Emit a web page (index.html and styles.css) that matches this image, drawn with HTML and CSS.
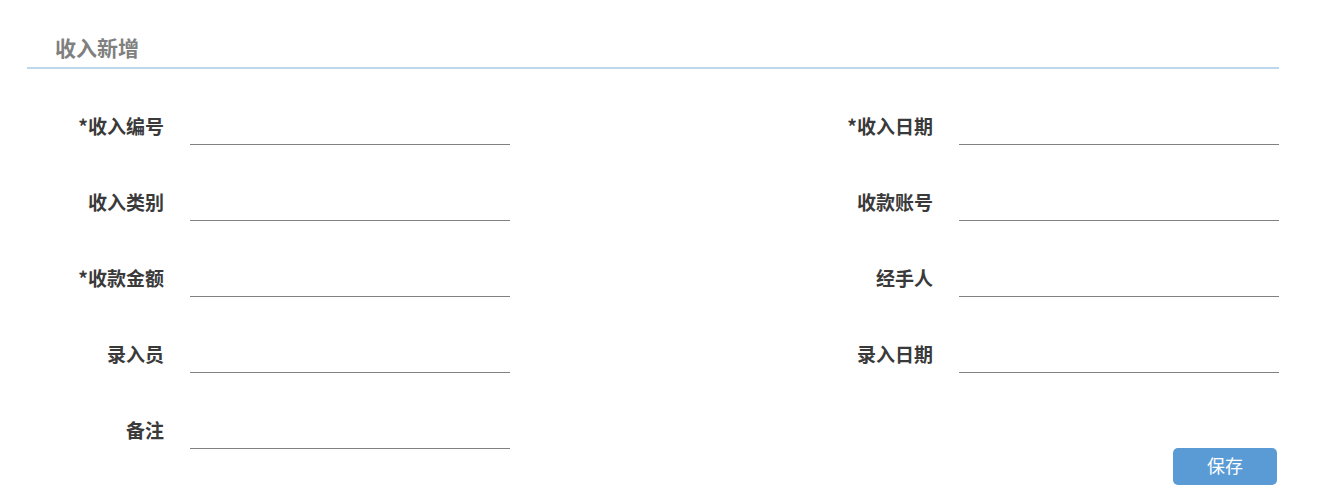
FILE: index.html
```html
<!DOCTYPE html>
<html lang="zh">
<head>
<meta charset="utf-8">
<title>收入新增</title>
<link rel="stylesheet" href="styles.css">
</head>
<body>
<div class="page">
  <div class="header"><h1 class="title">收入新增</h1></div>
  <form class="form">
    <div class="field"><label class="label">*收入编号</label><input class="input" type="text"></div>
    <div class="field"><label class="label">*收入日期</label><input class="input" type="text"></div>
    <div class="field"><label class="label">收入类别</label><input class="input" type="text"></div>
    <div class="field"><label class="label">收款账号</label><input class="input" type="text"></div>
    <div class="field"><label class="label">*收款金额</label><input class="input" type="text"></div>
    <div class="field"><label class="label">经手人</label><input class="input" type="text"></div>
    <div class="field"><label class="label">录入员</label><input class="input" type="text"></div>
    <div class="field"><label class="label">录入日期</label><input class="input" type="text"></div>
    <div class="field"><label class="label">备注</label><input class="input" type="text"></div>
  </form>
  <div class="footer"><button class="btn" type="button">保存</button></div>
</div>
</body>
</html>
```
FILE: styles.css
```css
html, body {
  margin: 0;
  padding: 0;
  background: #ffffff;
}
body {
  font-family: "Noto Sans CJK SC", "Noto Sans", sans-serif;
}
.page {
  margin: 0 40px 0 27px;
  width: 1252px;
}
.header {
  height: 69px;
  border-bottom: 2px solid #bdd7ee;
  box-sizing: border-box;
  padding: 32px 0 0 28px;
}
.title {
  margin: 0;
  font-size: 21px;
  line-height: 30px;
  font-weight: bold;
  color: #808080;
}
.form {
  margin-top: 40px;
  display: grid;
  grid-template-columns: 483px 483px;
  justify-content: space-between;
  row-gap: 40px;
}
.field {
  display: flex;
  align-items: center;
  gap: 26px;
  height: 36px;
}
.label {
  width: 137px;
  text-align: right;
  font-size: 19px;
  line-height: 24px;
  margin-bottom: 3px;
  font-weight: bold;
  color: #3a3a3a;
}
.input {
  width: 320px;
  height: 36px;
  box-sizing: border-box;
  border: none;
  border-bottom: 1px solid #808080;
  outline: none;
  padding: 0;
  background: transparent;
  font-size: 16px;
}
.footer {
  display: flex;
  justify-content: flex-end;
  padding-right: 2px;
  margin-top: -1px;
}
.btn {
  width: 104px;
  height: 37px;
  border: none;
  border-radius: 5px;
  background: #5b9bd5;
  color: #ffffff;
  font-family: "Noto Sans CJK SC", sans-serif;
  font-size: 18px;
  line-height: 24px;
  padding: 0 0 3px;
}
```
